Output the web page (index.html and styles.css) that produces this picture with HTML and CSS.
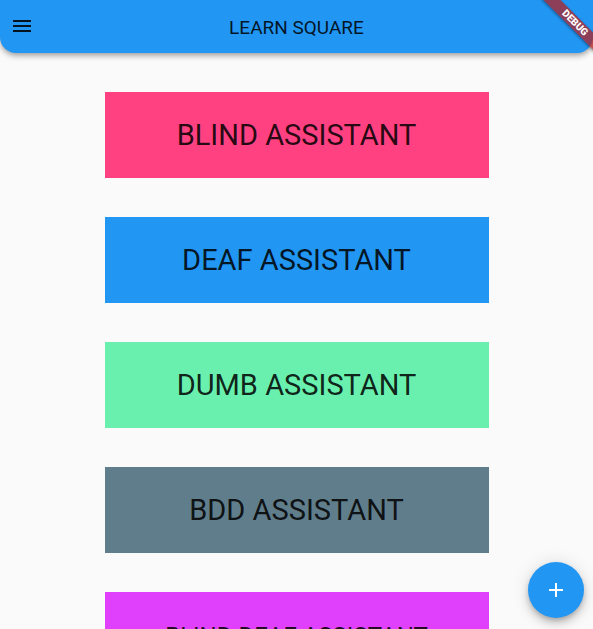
FILE: index.html
```html
<!DOCTYPE html>
<html>
<head>
<meta charset="utf-8">
<link rel="stylesheet" href="styles.css">
</head>
<body>
<div class="app">
  <header class="appbar">
    <button class="menu-btn" aria-label="menu">
      <svg width="24" height="24" viewBox="0 0 24 24"><path d="M3 18h18v-2H3v2zm0-5h18v-2H3v2zm0-7v2h18V6H3z" fill="rgba(0,0,0,0.87)"/></svg>
    </button>
    <div class="title">LEARN SQUARE</div>
  </header>
  <main class="list">
    <div class="card pink">BLIND ASSISTANT</div>
    <div class="card blue">DEAF ASSISTANT</div>
    <div class="card green">DUMB ASSISTANT</div>
    <div class="card grey">BDD ASSISTANT</div>
    <div class="card purple small">BLIND DEAF ASSISTANT</div>
  </main>
  <button class="fab" aria-label="add">
    <svg width="24" height="24" viewBox="0 0 24 24"><path d="M19 13h-6v6h-2v-6H5v-2h6V5h2v6h6v2z" fill="#fff"/></svg>
  </button>
  <div class="banner"><span>DEBUG</span></div>
</div>
</body>
</html>
```
FILE: styles.css
```css
html, body {
  margin: 0;
  padding: 0;
  width: 593px;
  height: 629px;
  overflow: hidden;
  background: #fafafa;
  font-family: Roboto, "Noto Sans", sans-serif;
}
.app {
  position: relative;
  width: 593px;
  height: 629px;
  overflow: hidden;
}
.appbar {
  position: relative;
  z-index: 2;
  height: 53px;
  background: #2196f3;
  border-radius: 0 0 16px 16px;
  box-shadow: 0 2px 4px -1px rgba(0,0,0,0.2), 0 4px 5px 0 rgba(0,0,0,0.14), 0 1px 10px 0 rgba(0,0,0,0.12);
  display: flex;
  align-items: center;
  justify-content: center;
}
.menu-btn {
  position: absolute;
  left: 10px;
  top: 14px;
  width: 24px;
  height: 24px;
  padding: 0;
  border: 0;
  background: none;
  display: flex;
}
.title {
  font-size: 19px;
  line-height: 1;
  padding-top: 1px;
  color: rgba(0,0,0,0.87);
}
.list {
  display: flex;
  flex-direction: column;
  align-items: center;
  gap: 39px;
  padding-top: 39px;
}
.card {
  width: 384px;
  height: 86px;
  flex: none;
  display: flex;
  align-items: center;
  justify-content: center;
  font-size: 29px;
  color: rgba(0,0,0,0.87);
}
.card.small {
  font-size: 24px;
  padding-top: 2px;
  box-sizing: border-box;
}
.pink { background: #ff4081; }
.blue { background: #2196f3; }
.green { background: #69f0ae; }
.grey { background: #607d8b; }
.purple { background: #e040fb; }
.fab {
  position: absolute;
  left: 528px;
  top: 562px;
  width: 56px;
  height: 56px;
  border-radius: 50%;
  border: 0;
  padding: 0;
  background: #2196f3;
  display: flex;
  align-items: center;
  justify-content: center;
  box-shadow: 0 3px 5px -1px rgba(0,0,0,0.2), 0 6px 10px 0 rgba(0,0,0,0.14), 0 1px 18px 0 rgba(0,0,0,0.12);
}
.banner {
  position: absolute;
  z-index: 5;
  left: 535px;
  top: 17px;
  width: 80px;
  height: 12px;
  transform: rotate(45deg);
  background: rgba(183,28,28,0.72);
  box-shadow: 0 1px 3px rgba(0,0,0,0.4);
  display: flex;
  align-items: center;
  justify-content: center;
}
.banner span {
  color: #fff;
  font-size: 10px;
  font-weight: 900;
  line-height: 1;
}
```
